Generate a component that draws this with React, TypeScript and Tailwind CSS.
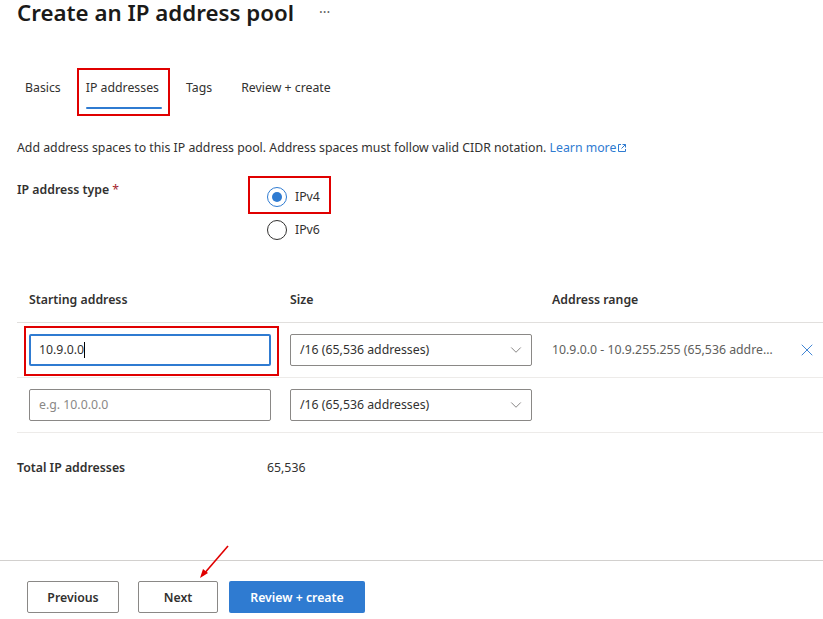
import { X, ChevronDown } from 'lucide-react';

const font = { fontFamily: '"Segoe UI", "Noto Sans", "Open Sans", sans-serif' };

function ExternalIcon() {
  return (
    <svg width="10" height="10" viewBox="0 0 10 10" className="inline-block ml-[1px] -mt-[2px]" fill="none" stroke="currentColor" strokeWidth="1">
      <path d="M4 1.5H1.5v7h7V6" />
      <path d="M5.5 1.5h3v3M8.5 1.5 4.5 5.5" />
    </svg>
  );
}

function Select({ value }: { value: string }) {
  return (
    <div className="w-[242px] h-[32px] border border-[#8a8886] rounded-[2px] flex items-center justify-between pl-[9px] pr-[6px] text-[12.3px] text-[#323130]">
      <span>{value}</span>
      <ChevronDown className="w-[18px] h-[18px] text-[#605e5c]" strokeWidth={1} />
    </div>
  );
}

export default function App() {
  return (
    <div className="w-[823px] h-[619px] bg-white overflow-hidden relative text-[#323130]" style={font}>
      {/* Header */}
      <div className="pl-[17px] flex items-center h-[26px]">
        <h1 className="text-[22.3px] font-semibold text-[#1b1a19] leading-[26px]">Create an IP address pool</h1>
        <span className="ml-[25px] text-[#605e5c] text-[14px] -mt-[4px]">···</span>
      </div>

      {/* Tabs */}
      <div className="flex pl-[25px] mt-[47px] text-[12.3px] h-[40px]">
        <div className="pt-[6px] text-[#323130]">Basics</div>
        <div className="relative pt-[6px] ml-[25px]">
          <span className="text-[#323130]">IP addresses</span>
          <div className="absolute left-0 right-[-3px] top-[34px] h-[2px] bg-[#2f7bd1] rounded" />
          <div className="absolute left-[-9px] right-[-11px] top-[-5px] bottom-[-3px] border-2 border-[#e00000]" />
        </div>
        <div className="pt-[6px] text-[#323130] ml-[27px]">Tags</div>
        <div className="pt-[6px] text-[#323130] ml-[29px]">Review + create</div>
      </div>

      {/* Description */}
      <p className="pl-[17px] mt-[26px] text-[12.3px] leading-[18px]">
        Add address spaces to this IP address pool. Address spaces must follow valid CIDR notation.{' '}
        <span className="text-[#2f7bd1]">Learn more<ExternalIcon /></span>
      </p>

      {/* IP address type */}
      <div className="flex pl-[17px] mt-[24px]">
        <div className="w-[250px] text-[12.3px] font-semibold leading-[18px]">
          IP address type <span className="text-[#a4262c] font-normal">*</span>
        </div>
        <div className="flex flex-col gap-[13px] pt-[6px]">
          <div className="relative flex items-center gap-[8px] text-[12.3px]">
            <div className="w-[20px] h-[20px] rounded-full border border-[#2f7bd1] flex items-center justify-center">
              <div className="w-[10px] h-[10px] rounded-full bg-[#2f7bd1]" />
            </div>
            <span>IPv4</span>
            <div className="absolute left-[-19px] right-[-11px] top-[-11px] bottom-[-7px] border-2 border-[#e00000]" />
          </div>
          <div className="flex items-center gap-[8px] text-[12.3px]">
            <div className="w-[20px] h-[20px] rounded-full border border-[#323130]" />
            <span>IPv6</span>
          </div>
        </div>
      </div>

      {/* Table */}
      <div className="ml-[17px] mt-[39px] text-[12.3px]">
        <div className="grid grid-cols-[261px_262px_1fr] h-[44px] items-center border-b border-[#e1dfdd] font-semibold pl-[12px]">
          <div>Starting address</div>
          <div>Size</div>
          <div>Address range</div>
        </div>
        <div className="grid grid-cols-[261px_262px_1fr] h-[55px] items-center border-b border-[#edebe9] pl-[12px]">
          <div className="relative">
            <div className="w-[242px] h-[32px] border-2 border-[#2f7bd1] rounded-[2px] flex items-center pl-[8px]">
              10.9.0.0<span className="inline-block w-[1px] h-[16px] bg-[#000]" />
            </div>
            <div className="absolute left-[-5px] top-[-8px] w-[255px] h-[50px] border-2 border-[#e00000]" />
          </div>
          <Select value="/16 (65,536 addresses)" />
          <div className="flex items-center justify-between pr-[6px] text-[#605e5c]">
            <span className="truncate w-[222px]">10.9.0.0 - 10.9.255.255 (65,536 addresses)</span>
            <X className="w-[20px] h-[20px] text-[#2f7bd1]" strokeWidth={1.1} />
          </div>
        </div>
        <div className="grid grid-cols-[261px_262px_1fr] h-[55px] items-center border-b border-[#edebe9] pl-[12px]">
          <div className="w-[242px] h-[32px] border border-[#8a8886] rounded-[2px] flex items-center pl-[9px] text-[#8a8886]">
            e.g. 10.0.0.0
          </div>
          <Select value="/16 (65,536 addresses)" />
          <div />
        </div>
      </div>

      {/* Total */}
      <div className="flex pl-[17px] mt-[26px] text-[12.3px]">
        <div className="w-[250px] font-semibold">Total IP addresses</div>
        <div>65,536</div>
      </div>

      {/* Footer */}
      <div className="absolute left-0 right-0 top-[560px] border-t border-[#d2d0ce] pt-[20px] pl-[27px] flex gap-[20px] text-[12.3px] font-semibold">
        <button className="w-[92px] h-[32px] border border-[#8a8886] rounded-[2px] bg-white text-[#323130] pt-[3px]">Previous</button>
        <button className="w-[80px] h-[32px] border border-[#8a8886] rounded-[2px] bg-white text-[#323130] -ml-[1px] pt-[3px]">Next</button>
        <button className="w-[136px] h-[32px] rounded-[2px] bg-[#2f7bd1] text-white -ml-[9px] pt-[3px]">Review + create</button>
      </div>

      {/* Annotation arrow */}
      <svg className="absolute left-[195px] top-[542px]" width="40" height="40" viewBox="0 0 40 40" fill="none">
        <path d="M33 4 L8 33" stroke="#e00000" strokeWidth="1.6" />
        <path d="M5 36 L8 27 L13 31 Z" fill="#e00000" />
      </svg>
    </div>
  );
}
